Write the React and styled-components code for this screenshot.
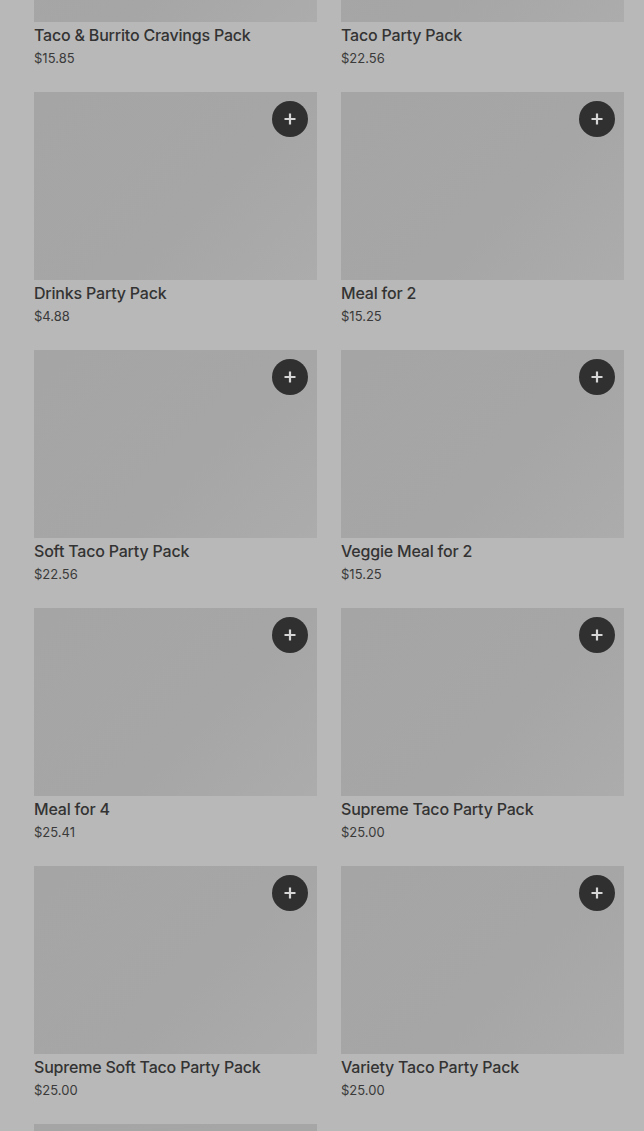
import React from "react";
import styled, { createGlobalStyle } from "styled-components";

const GlobalStyle = createGlobalStyle`
  html, body {
    margin: 0;
    padding: 0;
    background: #b8b8b8;
    overflow: hidden;
  }
  body {
    font-family: "Inter", "Liberation Sans", sans-serif;
  }
`;

const Page = styled.main`
  height: 1131px;
  overflow: hidden;
  background: #b8b8b8;
`;

const Grid = styled.div`
  display: grid;
  grid-template-columns: 283px 283px;
  column-gap: 24px;
  padding-left: 34px;
  margin-top: -166px;
`;

const Card = styled.div`
  display: flex;
  flex-direction: column;
  margin-bottom: 25px;
`;

const Thumb = styled.div`
  position: relative;
  height: 188px;
  background: linear-gradient(135deg, #a5a5a5 0%, #a6a6a6 60%, #acacac 100%);
`;

const AddButton = styled.button`
  position: absolute;
  top: 9px;
  right: 9px;
  width: 36px;
  height: 36px;
  border-radius: 50%;
  border: none;
  padding: 0;
  background: #303030;
  display: flex;
  align-items: center;
  justify-content: center;
  cursor: pointer;
`;

const Title = styled.div`
  margin-top: 3px;
  font-size: 16px;
  line-height: 20px;
  font-weight: 500;
  color: #333333;
  letter-spacing: -0.2px;
`;

const Price = styled.div`
  margin-top: 4px;
  font-size: 13px;
  line-height: 18px;
  color: #3a3a3a;
`;

const items = [
  { name: "Taco & Burrito Cravings Pack", price: "$15.85" },
  { name: "Taco Party Pack", price: "$22.56" },
  { name: "Drinks Party Pack", price: "$4.88" },
  { name: "Meal for 2", price: "$15.25" },
  { name: "Soft Taco Party Pack", price: "$22.56" },
  { name: "Veggie Meal for 2", price: "$15.25" },
  { name: "Meal for 4", price: "$25.41" },
  { name: "Supreme Taco Party Pack", price: "$25.00" },
  { name: "Supreme Soft Taco Party Pack", price: "$25.00" },
  { name: "Variety Taco Party Pack", price: "$25.00" },
  { name: "Nachos Party Pack", price: "$22.56" },
];

function Plus() {
  return (
    <svg width="14" height="14" viewBox="0 0 14 14">
      <path d="M7 1.5v11M1.5 7h11" stroke="#d6d6d6" strokeWidth="2.2" />
    </svg>
  );
}

export default function App() {
  return (
    <Page>
      <GlobalStyle />
      <Grid>
        {items.map((item) => (
          <Card key={item.name}>
            <Thumb>
              <AddButton aria-label={`Add ${item.name}`}>
                <Plus />
              </AddButton>
            </Thumb>
            <Title>{item.name}</Title>
            <Price>{item.price}</Price>
          </Card>
        ))}
      </Grid>
    </Page>
  );
}
